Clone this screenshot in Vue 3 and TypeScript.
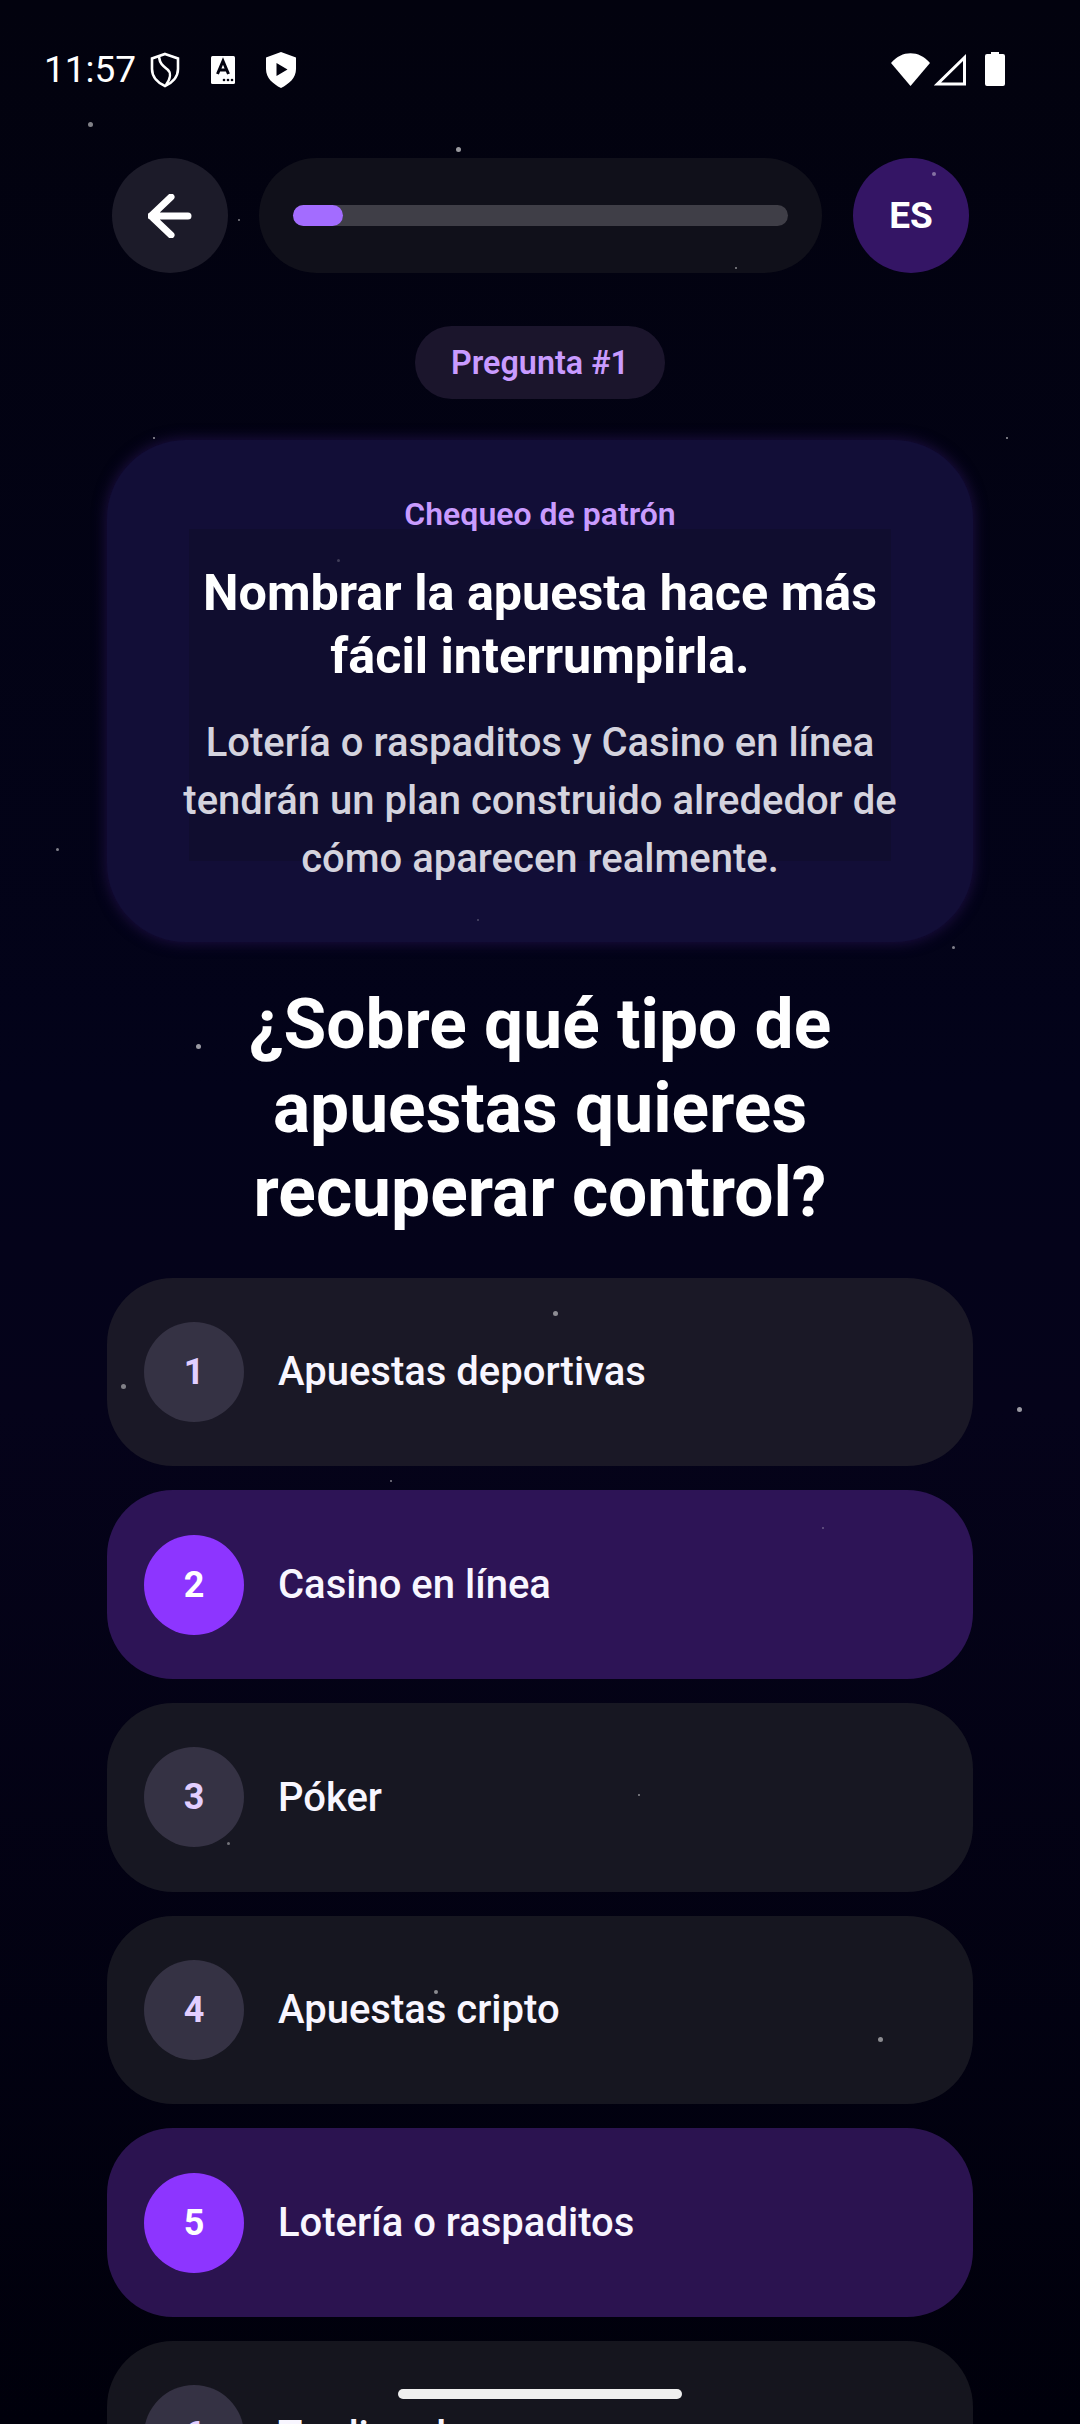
<script setup lang="ts">
interface Star { x: number; y: number; s: number; o: number }
const stars: Star[] = [
  { x: 88, y: 122, s: 5, o: 0.5 }, { x: 456, y: 147, s: 5, o: 0.6 }, { x: 238, y: 219, s: 2, o: 0.5 },
  { x: 932, y: 172, s: 4, o: 0.4 }, { x: 735, y: 267, s: 2, o: 0.5 }, { x: 153, y: 437, s: 2, o: 0.6 },
  { x: 1006, y: 437, s: 2, o: 0.6 }, { x: 337, y: 559, s: 3, o: 0.2 }, { x: 56, y: 848, s: 3, o: 0.5 },
  { x: 477, y: 919, s: 2, o: 0.25 }, { x: 952, y: 946, s: 3, o: 0.5 }, { x: 196, y: 1044, s: 5, o: 0.6 },
  { x: 121, y: 1384, s: 5, o: 0.45 }, { x: 553, y: 1311, s: 5, o: 0.5 }, { x: 1017, y: 1407, s: 5, o: 0.6 },
  { x: 390, y: 1480, s: 2, o: 0.5 }, { x: 822, y: 1527, s: 2, o: 0.3 }, { x: 638, y: 1794, s: 2, o: 0.5 },
  { x: 227, y: 1842, s: 3, o: 0.4 }, { x: 434, y: 1990, s: 4, o: 0.5 }, { x: 878, y: 2037, s: 5, o: 0.5 },
];
const options = [
  { n: 1, label: "Apuestas deportivas", on: false },
  { n: 2, label: "Casino en línea", on: true },
  { n: 3, label: "Póker", on: false },
  { n: 4, label: "Apuestas cripto", on: false },
  { n: 5, label: "Lotería o raspaditos", on: true },
  { n: 6, label: "Trading de memes", on: false },
];
</script>

<template>
  <div class="screen">
    <header class="status">
      <div class="status-left">
        <span class="time">11:57</span>
        <svg class="shield-o" viewBox="0 0 30 36" width="30" height="36"><path d="M15 2 L28 6.500 V17 C28 25 22 31 15 34 C8 31 2 25 2 17 V6.500 Z" fill="none" stroke="#fff" stroke-width="2.600"/><path d="M9 5 C10 12 13 14 17 17 C21 20 21 26 16 33" fill="none" stroke="#fff" stroke-width="2.600"/></svg>
        <svg class="glyph-card" viewBox="0 0 24 28" width="24" height="28"><rect width="24" height="28" rx="1.500" fill="#fff"/><path d="M6.500 18 L12 5 L17.500 18 M8.500 14 H15.500" fill="none" stroke="#03030f" stroke-width="3"/><circle cx="13" cy="24" r="1.300" fill="#03030f"/><circle cx="17" cy="24" r="1.300" fill="#03030f"/><circle cx="21" cy="24" r="1.300" fill="#03030f"/></svg>
        <svg class="shield-p" viewBox="0 0 30 36" width="30" height="36"><path fill-rule="evenodd" d="M15 0 L30 5.500 V17 C30 26 23 32 15 36 C7 32 0 26 0 17 V5.500 Z M10.500 11 V24 L21.500 17.500 Z" fill="#fff"/></svg>
      </div>
      <div class="status-right">
        <svg viewBox="0 0 39 33" width="39" height="33"><path d="M0 10 C11 -3 28 -3 39 10 L19.500 33 Z" fill="#fff"/></svg>
        <svg viewBox="0 0 33 33" width="33" height="33"><path d="M30.500 4.500 V31 H3.500 Z" fill="none" stroke="#fff" stroke-width="3"/></svg>
        <svg class="batt" viewBox="0 0 20 34" width="20" height="34"><path d="M6 0 H14 V2 H18 Q20 2 20 4 V32 Q20 34 18 34 H2 Q0 34 0 32 V4 Q0 2 2 2 H6 Z" fill="#fff"/></svg>
      </div>
    </header>

    <nav class="top">
      <button class="round back" aria-label="Atrás">
        <svg viewBox="0 0 44 44" width="44" height="44"><path d="M40 22 H3 M23 3 L3 22 L23 41" fill="none" stroke="#fff" stroke-width="7" stroke-linecap="round" stroke-linejoin="round"/></svg>
      </button>
      <div class="progress">
        <div class="track"><div class="fill"></div></div>
      </div>
      <button class="round lang">ES</button>
    </nav>

    <div class="pill-wrap"><span class="pill">Pregunta #1</span></div>

    <section class="panel">
      <div class="panel-inner"></div>
      <p class="eyebrow">Chequeo de patrón</p>
      <h2>Nombrar la apuesta hace más fácil interrumpirla.</h2>
      <p class="body">Lotería o raspaditos y Casino en línea tendrán un plan construido alrededor de cómo aparecen realmente.</p>
    </section>

    <h1>¿Sobre qué tipo de apuestas quieres recuperar control?</h1>

    <ul class="options">
      <li v-for="o in options" :key="o.n" class="option" :class="{ on: o.on }">
        <span class="num">{{ o.n }}</span>
        <span class="label">{{ o.label }}</span>
      </li>
    </ul>

    <div class="stars">
      <i v-for="(s, i) in stars" :key="i" :style="{ left: s.x + 'px', top: s.y + 'px', width: s.s + 'px', height: s.s + 'px', opacity: s.o }"></i>
    </div>
    <div class="handle"></div>
  </div>
</template>

<style scoped>
.screen {
  position: relative;
  width: 1080px;
  height: 2424px;
  overflow: hidden;
  background: linear-gradient(180deg, #02020e 0%, #03031a 45%, #05031a 58%, #00000b 100%);
  font-family: Roboto, "Noto Sans", sans-serif;
  color: #fff;
  box-sizing: border-box;
}
.status {
  height: 141px;
  padding: 46px 75px 0 44px;
  box-sizing: border-box;
  display: flex;
  justify-content: space-between;
  align-items: flex-start;
}
.status-left { display: flex; align-items: center; }
.time { font-size: 37px; line-height: 48px; color: #fff; width: 106px; }
.glyph-card { margin-left: 31px; }
.shield-p { margin-left: 31px; }
.status-right { display: flex; align-items: center; gap: 4px; padding-top: 6px; }
.batt { margin-left: 14px; }
.top {
  margin-top: 17px;
  padding: 0 111px 0 112px;
  display: flex;
  align-items: center;
  gap: 31px;
}
.round {
  width: 116px;
  height: 115px;
  border-radius: 50%;
  border: 0;
  padding: 0;
  color: #fff;
  font: 700 37px Roboto, sans-serif;
  display: flex;
  align-items: center;
  justify-content: center;
  flex: none;
}
.back { background: #1c1b29; }
.lang { background: #341565; }
.progress {
  flex: 1;
  height: 115px;
  border-radius: 58px;
  background: #10101a;
  padding: 0 34px;
  display: flex;
  align-items: center;
}
.track { width: 100%; height: 21px; border-radius: 11px; background: #3f3e47; }
.fill { width: 10%; height: 100%; border-radius: 11px; background: #a36cff; }
.pill-wrap { margin-top: 53px; display: flex; justify-content: center; }
.pill {
  width: 250px;
  height: 73px;
  border-radius: 37px;
  background: #1b152c;
  color: #c99bff;
  font-size: 32.300px;
  font-weight: 600;
  display: flex;
  align-items: center;
  justify-content: center;
}
.panel {
  position: relative;
  margin: 41px 107px 0;
  height: 502px;
  box-sizing: border-box;
  padding: 54px 0 0;
  border-radius: 79px;
  background: #120e37;
  box-shadow: 0 0 14px 1px #1d0f42;
  text-align: center;
}
.panel-inner {
  position: absolute;
  left: 82px;
  right: 82px;
  top: 89px;
  bottom: 81px;
  background: #100d2f;
}
.eyebrow, .panel h2, .body { position: relative; margin: 0; }
.eyebrow { font-size: 32px; font-weight: 600; line-height: 40px; color: #c99bff; }
.panel h2 { margin: 27px 90px 0; font-size: 50.300px; font-weight: 700; line-height: 63px; }
.body { margin: 26.500px 60px 0; font-size: 40px; font-weight: 500; line-height: 58px; color: #d4d3de; }
h1 {
  margin: 41px 160px 0;
  font-size: 69.500px;
  font-weight: 700;
  line-height: 84px;
  text-align: center;
}
.options {
  list-style: none;
  margin: 42.500px 107px 0;
  padding: 0;
  display: flex;
  flex-direction: column;
  gap: 24px;
}
.option {
  height: 188.700px;
  flex: none;
  border-radius: 66px;
  background: #171722;
  padding-left: 37px;
  display: flex;
  align-items: center;
  gap: 34px;
}
.option:nth-child(1) { background: #1a1826; }
.option:nth-child(4) { background: #161620; }
.option:nth-child(6) { background: #15151e; }
.option.on { background: #2d1456; }
.option.on:nth-child(5) { background: #2b1350; }
.num {
  width: 100px;
  height: 100px;
  border-radius: 50%;
  background: #353244;
  color: #e2ceff;
  font-size: 36px;
  font-weight: 700;
  display: flex;
  align-items: center;
  justify-content: center;
  flex: none;
}
.on .num { background: #8d35ff; color: #fff; }
.label { font-size: 40px; font-weight: 500; color: #f8f6ff; }
.stars { position: absolute; inset: 0; pointer-events: none; }
.stars i { position: absolute; display: block; border-radius: 50%; background: #fff; }
.handle {
  position: absolute;
  left: 398px;
  top: 2389px;
  width: 284px;
  height: 10px;
  border-radius: 5px;
  background: #efefef;
}
</style>
